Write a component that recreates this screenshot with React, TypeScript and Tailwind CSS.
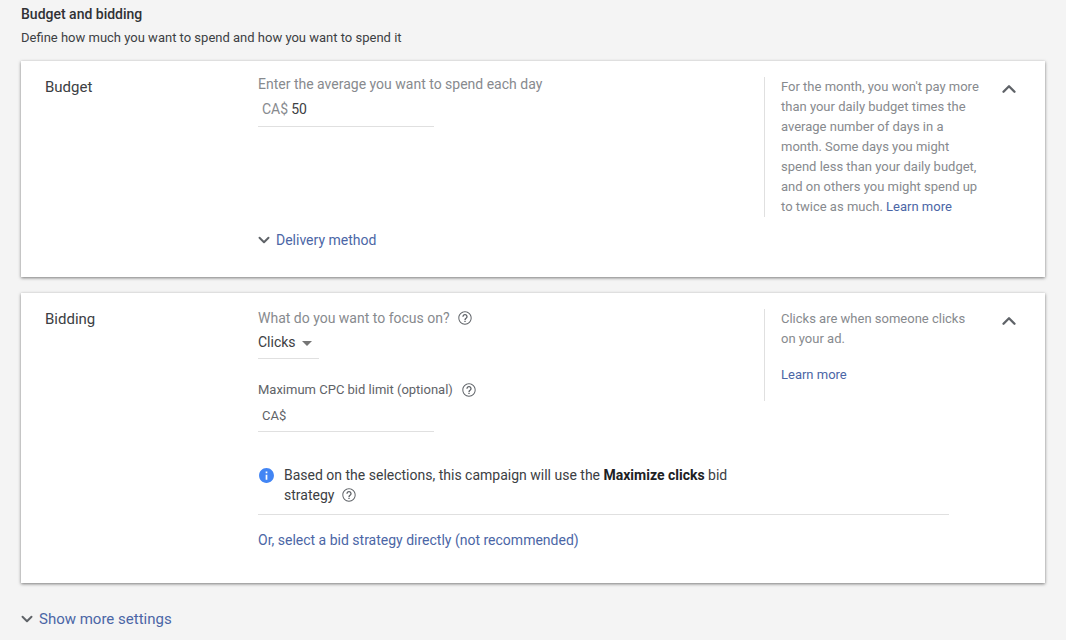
import React from 'react';
import { ChevronDown, ChevronUp } from 'lucide-react';

const HelpIcon = () => (
    <svg width="16" height="16" viewBox="0 0 24 24" fill="#5f6368" className="shrink-0">
        <path d="M11 18h2v-2h-2v2zm1-16C6.48 2 2 6.48 2 12s4.48 10 10 10 10-4.48 10-10S17.52 2 12 2zm0 18.5c-4.69 0-8.5-3.81-8.5-8.5S7.31 3.5 12 3.5s8.5 3.81 8.5 8.5-3.81 8.5-8.5 8.5zM12 6c-2.21 0-4 1.79-4 4h2c0-1.1.9-2 2-2s2 .9 2 2c0 2-3 1.75-3 5h2c0-2.25 3-2.5 3-5 0-2.21-1.79-4-4-4z" />
    </svg>
);

const InfoIcon = () => (
    <svg width="17" height="17" viewBox="0 0 24 24" fill="#4285f4" className="shrink-0">
        <path d="M12 1.5C6.2 1.5 1.5 6.2 1.5 12S6.2 22.5 12 22.5 22.5 17.8 22.5 12 17.8 1.5 12 1.5zm1.2 16.5h-2.4v-7.2h2.4V18zm0-9.2h-2.4V6.4h2.4v2.4z" />
    </svg>
);

export default function App() {
    return (
        <div className="w-[1066px] h-[640px] overflow-hidden bg-[#f4f4f4] font-['Roboto',sans-serif] text-[#3c4043]">
            <div className="px-[21px] pt-[5px]">
                <h2 className="text-[14px] leading-[18px] font-medium text-[#303134]">Budget and bidding</h2>
                <p className="mt-[6px] text-[13px] leading-[18px] text-[#3c4043]">Define how much you want to spend and how you want to spend it</p>

                <section className="mt-[14px] h-[216px] bg-white shadow-[0_1px_3px_rgba(0,0,0,0.5)] flex">
                    <div className="w-[237px] pl-6 pt-[16px] text-[15px] leading-5 text-[#3c4043]">Budget</div>
                    <div className="w-[506px] pt-[13px] flex flex-col">
                        <div className="text-[14px] leading-[20px] text-[#878a8e]">Enter the average you want to spend each day</div>
                        <div className="mt-[5px] w-[176px] h-[28px] border-b border-[#e0e0e0] pl-1 text-[14px] leading-5">
                            <span className="text-[#878a8e]">CA$</span>
                            <span className="ml-[3px] text-[#3c4043]">50</span>
                        </div>
                        <div className="mt-[103px] flex items-center gap-[3px] text-[14px] leading-5 text-[#4b66a6]">
                            <ChevronDown size={18} strokeWidth={2.6} className="-ml-[3px] text-[#5f6368]" />
                            <span>Delivery method</span>
                        </div>
                    </div>
                    <div className="mt-[16px] h-[140px] w-[217px] border-l border-[#e0e0e0] pl-4 text-[13px] leading-[20px] text-[#878a8e]">
                        For the month, you won't pay more than your daily budget times the average number of days in a month. Some days you might spend less than your daily budget, and on others you might spend up to twice as much. <span className="text-[#4b66a6]">Learn more</span>
                    </div>
                    <div className="ml-[17px] pt-[17px]">
                        <ChevronUp size={22} strokeWidth={2.6} className="text-[#5f6368]" />
                    </div>
                </section>

                <section className="mt-[16px] h-[290px] bg-white shadow-[0_1px_3px_rgba(0,0,0,0.5)] flex">
                    <div className="w-[237px] pl-6 pt-[16px] text-[15px] leading-5 text-[#3c4043]">Bidding</div>
                    <div className="w-[506px] pt-[15px] flex flex-col">
                        <div className="flex items-center gap-[7px] text-[14px] leading-5 text-[#878a8e]">
                            <span>What do you want to focus on?</span>
                            <HelpIcon />
                        </div>
                        <div className="mt-[4px] w-[61px] h-[27px] border-b border-[#e0e0e0] flex items-start gap-[6px] text-[14px] leading-5 text-[#3c4043]">
                            <span>Clicks</span>
                            <span className="mt-[9px] w-0 h-0 border-x-[5px] border-x-transparent border-t-[5px] border-t-[#757575]" />
                        </div>
                        <div className="mt-[21px] flex items-center gap-[8px] text-[13px] leading-5 text-[#5f6368]">
                            <span>Maximum CPC bid limit (optional)</span>
                            <HelpIcon />
                        </div>
                        <div className="mt-[6px] w-[176px] h-[26px] border-b border-[#e0e0e0] pl-1 text-[13px] leading-5 text-[#5f6368]">CA$</div>
                        <div className="mt-[33px] w-[691px] shrink-0 border-b border-[#e0e0e0] pb-[9px] flex gap-[9px]">
                            <div className="pt-[2px]"><InfoIcon /></div>
                            <div className="w-[460px] text-[14px] leading-[20px] text-[#3c4043]">
                                Based on the selections, this campaign will use the <b className="font-bold text-[#202124]">Maximize clicks</b> bid
                                <div className="flex items-center gap-[7px]">strategy <HelpIcon /></div>
                            </div>
                        </div>
                        <div className="mt-[15px] text-[14px] leading-5 text-[#4b66a6]">Or, select a bid strategy directly (not recommended)</div>
                    </div>
                    <div className="mt-[16px] h-[92px] w-[217px] border-l border-[#e0e0e0] pl-4 text-[13px] leading-[20px] text-[#878a8e]">
                        <div className="w-[190px]">Clicks are when someone clicks on your ad.</div>
                        <div className="mt-[16px] text-[#4b66a6]">Learn more</div>
                    </div>
                    <div className="ml-[17px] pt-[17px]">
                        <ChevronUp size={22} strokeWidth={2.6} className="text-[#5f6368]" />
                    </div>
                </section>

                <div className="mt-[26px] flex items-center gap-[3px] text-[15px] leading-5 text-[#4b66a6]">
                    <ChevronDown size={18} strokeWidth={2.6} className="-ml-[3px] text-[#5f6368]" />
                    <span>Show more settings</span>
                </div>
            </div>
        </div>
    );
}
